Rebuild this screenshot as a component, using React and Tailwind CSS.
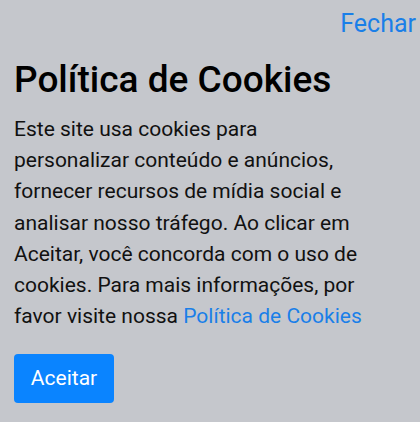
import React from "react";

const App = () => {
  return (
    <div
      className="w-[420px] h-[422px] bg-[#c5c7cc] overflow-hidden"
      style={{ fontFamily: "Roboto, 'Noto Sans', sans-serif" }}
    >
      <div className="flex justify-end pt-[9px] pr-[4px]">
        <button className="text-[25px] leading-[30px] text-[#1a7fe8]">Fechar</button>
      </div>
      <div className="px-[14px]">
        <h1 className="mt-[19px] text-[37px] leading-[44px] font-medium text-black">
          Política de Cookies
        </h1>
        <p className="mt-[12px] w-[352px] text-[21px] leading-[31.2px] text-[#111]">
          Este site usa cookies para personalizar conteúdo e anúncios, fornecer
          recursos de mídia social e analisar nosso tráfego. Ao clicar em
          Aceitar, você concorda com o uso de cookies. Para mais informações,
          por favor visite nossa{" "}
          <a className="text-[#1a7fe8]">Política de Cookies</a>
        </p>
        <button className="mt-[22px] w-[100px] h-[49px] rounded-[4px] bg-[#0a84ff] text-white text-[21px]">
          Aceitar
        </button>
      </div>
    </div>
  );
};

export default App;
